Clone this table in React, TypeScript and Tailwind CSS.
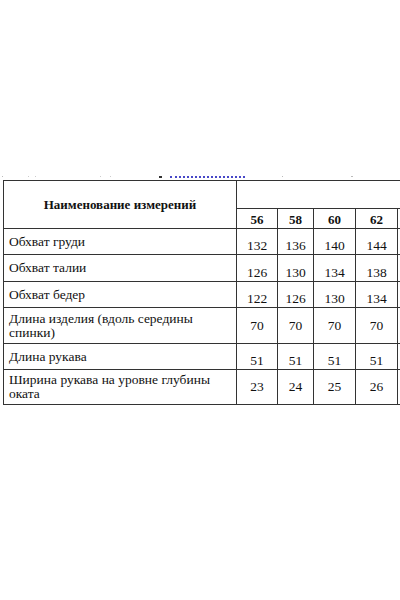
// LIBRARIES
import React from "react";

/*======= DATA =======*/
type Row = {
  label: React.ReactNode;
  values: number[];
  height: string;
  align: "bottom" | "middle";
};

const SIZES = [56, 58, 60, 62];

const ROWS: Row[] = [
  { label: "Обхват груди", values: [132, 136, 140, 144], height: "h-[26px]", align: "bottom" },
  { label: "Обхват талии", values: [126, 130, 134, 138], height: "h-[27px]", align: "bottom" },
  { label: "Обхват бедер", values: [122, 126, 130, 134], height: "h-[26px]", align: "bottom" },
  {
    label: (
      <>
        Длина изделия (вдоль середины
        <br />
        спинки)
      </>
    ),
    values: [70, 70, 70, 70],
    height: "h-[36px]",
    align: "middle",
  },
  { label: "Длина рукава", values: [51, 51, 51, 51], height: "h-[26px]", align: "bottom" },
  {
    label: (
      <>
        Ширина рукава на уровне глубины
        <br />
        оката
      </>
    ),
    values: [23, 24, 25, 26],
    height: "h-[35px]",
    align: "middle",
  },
];

const COL_WIDTHS = ["w-[233px]", "w-[41px]", "w-[36px]", "w-[42px]", "w-[42px]", "w-[60px]"];

/*======= APP =======*/
export default function App() {
  /*------- RENDERER -------*/
  return (
    <div className="w-[400px] h-[600px] bg-white overflow-hidden text-[#111] font-['Liberation_Serif','Times_New_Roman',serif]">
      {/* TOP MARKS */}
      <div className="h-[176px]" />
      <div className="h-[3px] flex items-start">
        <span className="ml-[2px] w-[1px] h-[1px] bg-[#bbb]" />
        <span className="ml-[25px] w-[1px] h-[1px] bg-[#ccc]" />
        <span className="ml-[6px] w-[1px] h-[1px] bg-[#ccc]" />
        <span className="ml-[64px] w-[1px] h-[1px] bg-[#ccc]" />
        <span className="ml-[9px] w-[1px] h-[1px] bg-[#ccc]" />
        <span className="ml-[48px] w-[3px] h-[2px] bg-[#333]" />
        <span className="ml-[8px] w-[75px] h-[2px] border-b-2 border-dotted border-[#4848c8]" />
        <span className="ml-[37px] w-[1px] h-[1px] bg-[#bbb]" />
        <span className="ml-[68px] w-[2px] h-[1px] bg-[#bbb]" />
      </div>
      <div className="h-[1px]" />

      {/* TABLE */}
      <div className="pl-[3px]">
        <table className="table-fixed border-collapse w-[454px] text-[13.5px] leading-[14px] text-[#111] font-['Liberation_Serif','Times_New_Roman',serif]">
          <colgroup>
            {COL_WIDTHS.map((w, i) => (
              <col key={i} className={w} />
            ))}
          </colgroup>
          <tbody>
            {/* HEADER */}
            <tr className="h-[28px]">
              <td
                rowSpan={2}
                className="border border-[#333] text-center align-middle font-bold text-[13px] pt-[1px]"
              >
                Наименование измерений
              </td>
              <td colSpan={5} className="border border-[#333]" />
            </tr>
            <tr className="h-[20px]">
              {SIZES.map((size) => (
                <td
                  key={size}
                  className="border border-[#333] text-center align-bottom font-bold text-[13px] pb-[1px]"
                >
                  {size}
                </td>
              ))}
              <td className="border border-[#333]" />
            </tr>

            {/* ROWS */}
            {ROWS.map((row, i) => (
              <tr key={i} className={row.height}>
                <td className="border border-[#333] align-middle pl-[5px]">{row.label}</td>
                {row.values.map((value, j) => (
                  <td
                    key={j}
                    className={
                      row.align === "bottom"
                        ? "border border-[#333] text-center align-bottom pb-[1px]"
                        : "border border-[#333] text-center align-middle"
                    }
                  >
                    {value}
                  </td>
                ))}
                <td className="border border-[#333]" />
              </tr>
            ))}
          </tbody>
        </table>
      </div>
    </div>
  );
}
